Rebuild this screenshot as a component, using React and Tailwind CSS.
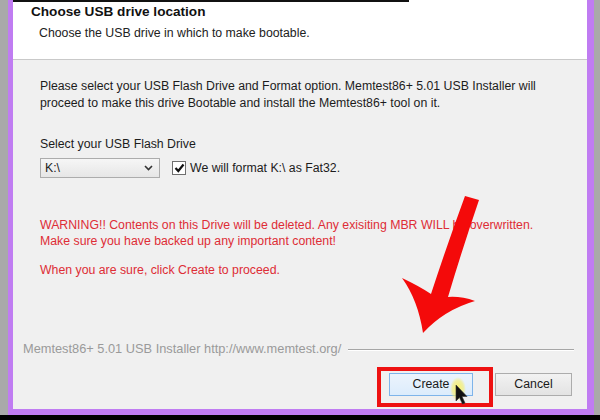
import React from "react";

const font = { fontFamily: '"Liberation Sans", Arial, sans-serif' };

const Chevron = () => (
  <svg width="9" height="6" viewBox="0 0 9 6">
    <path d="M1 1 L4.5 4.5 L8 1" fill="none" stroke="#333" strokeWidth="1.6" />
  </svg>
);

const Check = () => (
  <svg width="11" height="10" viewBox="0 0 11 10">
    <path d="M1.5 5 L4.3 8 L9.5 1.5" fill="none" stroke="#111" strokeWidth="2.2" />
  </svg>
);

// red arrow, highlight box and mouse pointer drawn on top of the dialog
const Markup = () => (
  <svg className="absolute inset-0 pointer-events-none" width="600" height="420" viewBox="0 0 600 420">
    <defs>
      <radialGradient id="glow" cx="0.5" cy="0.5" r="0.5">
        <stop offset="0" stopColor="#fbf35a" stopOpacity="0.95" />
        <stop offset="0.7" stopColor="#f6ee6a" stopOpacity="0.6" />
        <stop offset="1" stopColor="#f6ee6a" stopOpacity="0" />
      </radialGradient>
    </defs>
    <path
      d="M465 196 L479 200 Q462 250 448 297 Q461 296 475 301 Q444 310 423 333 Q418 300 402 278 Q419 286 431 294 Q447 245 465 196 Z"
      fill="#f40a0a"
    />
    <rect x="379" y="369" width="112" height="36" fill="none" stroke="#ee1111" strokeWidth="4" />
    <ellipse cx="458" cy="389" rx="8" ry="12" fill="url(#glow)" />
    <path
      d="M456 385 L456 401 L459.5 397.5 L462.5 404 L465 403 L462 396.5 L467 396.5 Z"
      fill="#111"
      stroke="#333"
      strokeWidth="0.6"
    />
  </svg>
);

export default function App() {
  return (
    <div className="relative w-[600px] h-[420px] flex flex-col bg-black overflow-hidden" style={font}>
      <div className="flex flex-1">
        <div className="w-[8px] bg-[#a9a9a9]" />
        <div className="flex-1 flex flex-col bg-[#c07cf2] pl-[5px] pr-[7px] pb-[6px]">
          <div className="flex-1 flex flex-col">
            {/* header */}
            <div className="h-[60px] bg-white border-b border-[#c9c9c9]">
              <div className="w-[396px] h-[2px] bg-[#111]" />
              <div className="pl-[18px] pt-[1px]">
                <div className="text-[13.6px] font-bold text-[#111] leading-[18px]">Choose USB drive location</div>
                <div className="text-[12.3px] text-[#222] leading-[18px] mt-[3px] pl-[8px]">
                  Choose the USB drive in which to make bootable.
                </div>
              </div>
            </div>

            {/* body */}
            <div className="flex-1 flex flex-col bg-[#f0f0f0]">
              <div className="pl-[27px] pt-[18px] text-[12.3px] text-[#1c1c1c]">
                <p className="leading-[17px]">
                  Please select your USB Flash Drive and Format option. Memtest86+ 5.01 USB Installer will
                  <br />
                  proceed to make this drive Bootable and install the Memtest86+ tool on it.
                </p>
                <p className="leading-[17px] mt-[24px]">Select your USB Flash Drive</p>
                <div className="flex items-center mt-[5px]">
                  <div className="w-[120px] h-[20px] flex items-center justify-between pl-[4px] pr-[6px] border border-[#acacac] bg-gradient-to-b from-[#f6f6f6] to-[#e6e6e6]">
                    <span className="leading-none">K:\</span>
                    <Chevron />
                  </div>
                  <div className="ml-[12px] w-[14px] h-[14px] border border-[#6f6f6f] bg-white flex items-center justify-center">
                    <Check />
                  </div>
                  <span className="ml-[4px]">We will format K:\ as Fat32.</span>
                </div>
                <div className="text-[#de2d36] mt-[39px]">
                  <p className="leading-[16px]">
                    WARNING!! Contents on this Drive will be deleted. Any exisiting MBR WILL be overwritten.
                  </p>
                  <p className="leading-[16px]">Make sure you have backed up any important content!</p>
                  <p className="leading-[16px] mt-[13px]">When you are sure, click Create to proceed.</p>
                </div>
              </div>

              {/* footer */}
              <div className="mt-auto flex items-center pl-[10px] pr-[13px]">
                <span className="text-[12.8px] text-[#9a9a9a] leading-[16px] whitespace-nowrap">
                  Memtest86+ 5.01 USB Installer http://www.memtest.org/
                </span>
                <div className="flex-1 ml-[7px] mt-[2px] border-t border-[#a6a6a6] border-b border-b-white" />
              </div>
              <div className="flex justify-end gap-[22px] pr-[15px] mt-[16px] mb-[13px] text-[12.3px]">
                <button className="w-[84px] h-[23px] border border-[#7eb4ea] bg-gradient-to-b from-[#ecf4fc] to-[#dcecfc] text-[#1a1a1a]">
                  Create
                </button>
                <button className="w-[77px] h-[23px] border border-[#acacac] bg-gradient-to-b from-[#f2f2f2] to-[#e3e3e3] text-[#1a1a1a]">
                  Cancel
                </button>
              </div>
            </div>
          </div>
        </div>
        <div className="w-[6px] bg-[#a9a9a9]" />
      </div>
      <div className="h-[5px] bg-black" />
      <Markup />
    </div>
  );
}
